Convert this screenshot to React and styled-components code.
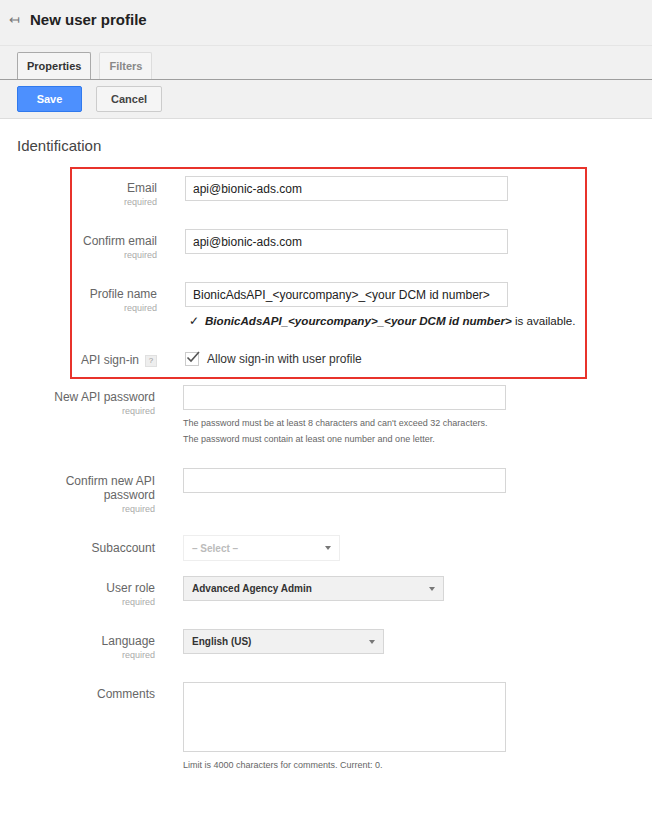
import React from "react";
import styled, { createGlobalStyle } from "styled-components";

const Global = createGlobalStyle`
  body { margin: 0; background: #fff; font-family: "Liberation Sans", Arial, sans-serif; }
`;

const Header = styled.div`
  height: 38px;
  padding-bottom: 7px;
  background: #f1f1f1;
  border-bottom: 1px solid #e5e5e5;
  display: flex;
  align-items: center;
  padding-left: 9px;
`;
const Back = styled.span`
  color: #777;
  font-size: 13px;
  margin-right: 10px;
`;
const Title = styled.h1`
  margin: 0;
  font-size: 15px;
  font-weight: bold;
  color: #222;
`;
const TabBar = styled.div`
  background: #f1f1f1;
  padding-left: 17px;
  display: flex;
  align-items: flex-end;
  gap: 8px;
  border-bottom: 1px solid #9e9e9e;
  box-sizing: border-box;
  height: 34px;
`;
const Tab = styled.div`
  height: 27px;
  box-sizing: border-box;
  padding: 0 9px;
  display: flex;
  align-items: center;
  font-size: 11px;
  font-weight: bold;
  color: ${(p) => (p.$active ? "#333" : "#888")};
  border: 1px solid ${(p) => (p.$active ? "#aaa" : "#ddd")};
  border-bottom: none;
  background: #f5f5f5;
  border-radius: 2px 2px 0 0;
`;
const Toolbar = styled.div`
  background: #f1f1f1;
  height: 38px;
  padding-left: 17px;
  display: flex;
  align-items: center;
  gap: 14px;
  border-bottom: 1px solid #ddd;
`;
const Button = styled.button`
  height: 26px;
  min-width: 65px;
  padding: 0 14px;
  font: bold 11px "Liberation Sans", Arial, sans-serif;
  border-radius: 2px;
  color: ${(p) => (p.$primary ? "#fff" : "#444")};
  background: ${(p) => (p.$primary ? "#4d90fe" : "#f5f5f5")};
  border: 1px solid ${(p) => (p.$primary ? "#3079ed" : "#ccc")};
`;
const Content = styled.div`
  padding: 18px 17px 0;
`;
const Section = styled.h2`
  margin: 0 0 13px;
  font-size: 15px;
  font-weight: normal;
  color: #444;
`;
const Boxed = styled.div`
  margin-left: 53px;
  width: 513px;
  border: 2px solid #e8332b;
  padding: 7px 0 10px;
  margin-bottom: 6px;
`;
const Row = styled.div`
  display: flex;
  align-items: flex-start;
  margin-bottom: ${(p) => p.$mb ?? 21}px;
`;
const Label = styled.div`
  width: ${(p) => p.$w ?? 138}px;
  flex-shrink: 0;
  text-align: right;
  font-size: 12px;
  line-height: 14px;
  color: #666;
  padding-top: ${(p) => p.$pt ?? 5}px;
  box-sizing: border-box;
  padding-left: ${(p) => (p.$w ? 0 : 10)}px;
  white-space: ${(p) => (p.$w ? "nowrap" : "normal")};
`;
const Req = styled.div`
  font-size: 9px;
  line-height: 11px;
  color: #aaa;
  margin-top: 2px;
`;
const Field = styled.div`
  margin-left: 28px;
`;
const Input = styled.div`
  width: 323px;
  height: 25px;
  box-sizing: border-box;
  border: 1px solid #d6d6d6;
  font-size: 12px;
  color: #222;
  padding: 0 7px;
  display: flex;
  align-items: center;
`;
const TextArea = styled(Input)`
  height: 70px;
`;
const Help = styled.div`
  font-size: 9px;
  color: #666;
  line-height: 16px;
  margin-top: ${(p) => p.$mt ?? 6}px;
`;
const Available = styled.div`
  font-size: 11.6px;
  color: #222;
  margin-top: 7px;
  padding-left: 4px;
  white-space: nowrap;
  b { font-style: italic; }
`;
const CheckRow = styled.label`
  display: flex;
  align-items: center;
  gap: 8px;
  font-size: 12px;
  color: #333;
`;
const Box = styled.span`
  width: 12px;
  height: 12px;
  border: 1px solid #ccc;
  position: relative;
  display: inline-block;
`;
const Help2 = styled.span`
  display: inline-block;
  font-size: 8px;
  color: #999;
  background: #eee;
  border: 1px solid #e0e0e0;
  width: 10px;
  height: 10px;
  line-height: 10px;
  text-align: center;
  margin-left: 6px;
  vertical-align: middle;
`;
const Select = styled.div`
  width: ${(p) => p.$w}px;
  height: ${(p) => p.$h ?? 25}px;
  box-sizing: border-box;
  border: 1px solid ${(p) => (p.$muted ? "#eee" : "#d6d6d6")};
  background: ${(p) => (p.$muted ? "#fff" : "#f1f1f1")};
  font-size: 10px;
  font-weight: bold;
  color: ${(p) => (p.$muted ? "#bbb" : "#333")};
  display: flex;
  align-items: center;
  justify-content: space-between;
  padding: 0 8px;
  &::after {
    content: "";
    border: 3px solid transparent;
    border-top: 4px solid #777;
    margin-top: 3px;
  }
`;

export default function App() {
  return (
    <>
      <Global />
      <Header>
        <Back>↤</Back>
        <Title>New user profile</Title>
      </Header>
      <TabBar>
        <Tab $active>Properties</Tab>
        <Tab>Filters</Tab>
      </TabBar>
      <Toolbar>
        <Button $primary>Save</Button>
        <Button>Cancel</Button>
      </Toolbar>
      <Content>
        <Section>Identification</Section>
        <Boxed>
          <Row>
            <Label $w={85}>Email<Req>required</Req></Label>
            <Field><Input>api@bionic-ads.com</Input></Field>
          </Row>
          <Row>
            <Label $w={85}>Confirm email<Req>required</Req></Label>
            <Field><Input>api@bionic-ads.com</Input></Field>
          </Row>
          <Row $mb={24}>
            <Label $w={85}>Profile name<Req>required</Req></Label>
            <Field>
              <Input>BionicAdsAPI_&lt;yourcompany&gt;_&lt;your DCM id number&gt;</Input>
              <Available>
                <span style={{ marginRight: 6 }}>✓</span>
                <b>BionicAdsAPI_&lt;yourcompany&gt;_&lt;your DCM id number&gt;</b> is available.
              </Available>
            </Field>
          </Row>
          <Row $mb={0}>
            <Label $w={85} $pt={1}>API sign-in<Help2>?</Help2></Label>
            <Field>
              <CheckRow>
                <Box>
                  <svg width="14" height="12" viewBox="0 0 14 12" style={{ position: "absolute", left: 0, top: -2 }}>
                    <path d="M1.5 6.5 L5 10 L13 1" fill="none" stroke="#555" strokeWidth="1.6" />
                  </svg>
                </Box>
                Allow sign-in with user profile
              </CheckRow>
            </Field>
          </Row>
        </Boxed>
        <Row $mb={21}>
          <Label>New API password<Req>required</Req></Label>
          <Field>
            <Input />
            <Help $mt={5}>
              The password must be at least 8 characters and can't exceed 32 characters.<br />
              The password must contain at least one number and one letter.
            </Help>
          </Field>
        </Row>
        <Row $mb={20}>
          <Label $pt={6}>Confirm new API password<Req>required</Req></Label>
          <Field><Input /></Field>
        </Row>
        <Row $mb={15}>
          <Label $pt={6}>Subaccount</Label>
          <Field><Select $w={157} $h={26} $muted>– Select –</Select></Field>
        </Row>
        <Row>
          <Label>User role<Req>required</Req></Label>
          <Field><Select $w={261}>Advanced Agency Admin</Select></Field>
        </Row>
        <Row>
          <Label>Language<Req>required</Req></Label>
          <Field><Select $w={201}>English (US)</Select></Field>
        </Row>
        <Row>
          <Label>Comments</Label>
          <Field>
            <TextArea />
            <Help $mt={5}>Limit is 4000 characters for comments. Current: 0.</Help>
          </Field>
        </Row>
      </Content>
    </>
  );
}
